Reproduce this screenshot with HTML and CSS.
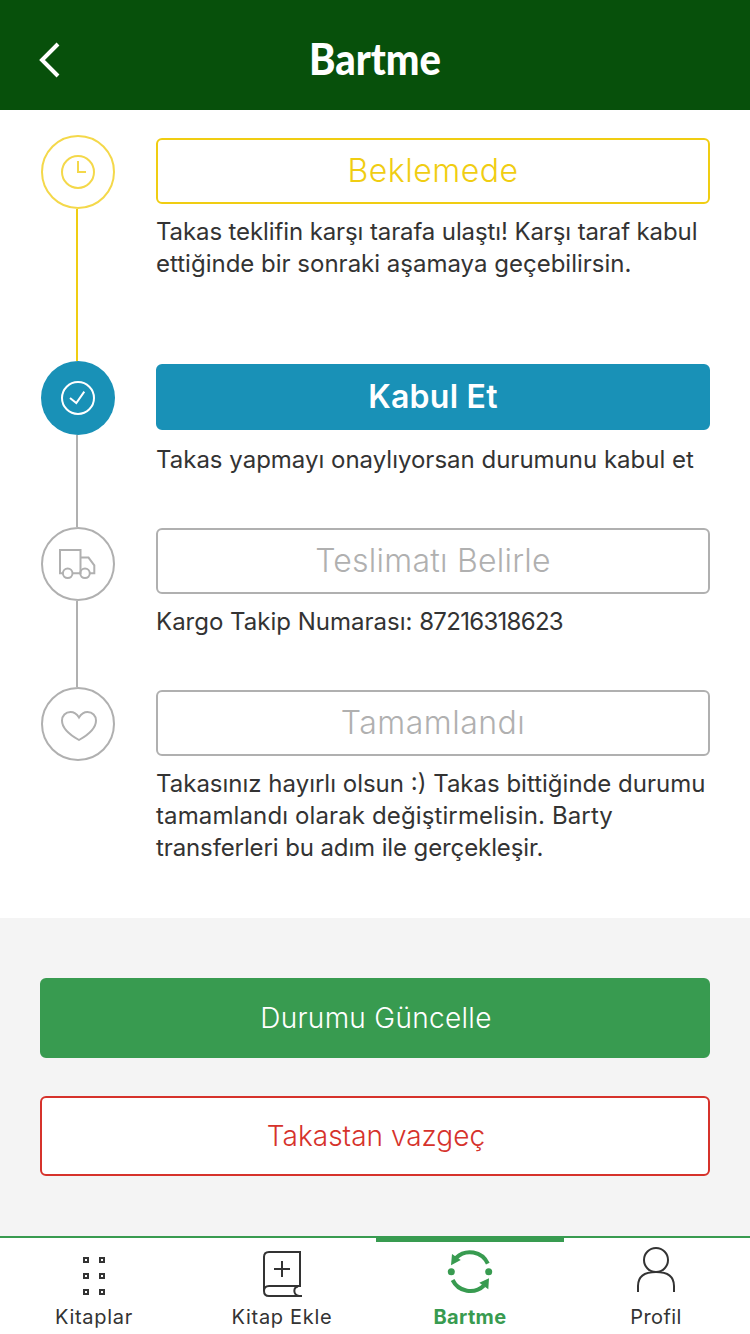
FILE: index.html
```html
<!DOCTYPE html>
<html lang="tr">
<head>
<meta charset="utf-8">
<title>Bartme</title>
<link rel="stylesheet" href="styles.css">
</head>
<body>
<div class="screen">
  <header class="header">
    <svg class="back" width="24" height="38" viewBox="0 0 24 38"><path d="M20 3 4 19l16 16" fill="none" stroke="#fff" stroke-width="4"/></svg>
    <h1 class="title">Bartme</h1>
  </header>

  <main class="steps">
    <section class="step step-waiting">
      <div class="rail">
        <svg class="badge" viewBox="0 0 74 74"><circle cx="37" cy="37" r="36"/><circle cx="37" cy="37" r="16"/><path d="M37 26v11h8"/></svg>
        <i class="line"></i>
      </div>
      <div class="body">
        <div class="status">Beklemede</div>
        <p class="note"><span class="fit-tight">Takas teklifin karşı tarafa ulaştı! Karşı taraf kabul</span><br>ettiğinde bir sonraki aşamaya geçebilirsin.</p>
      </div>
    </section>

    <section class="step step-accept">
      <div class="rail">
        <svg class="badge" viewBox="0 0 74 74"><circle class="disc" cx="37" cy="37" r="37"/><circle cx="37" cy="37" r="16"/><path d="m29 37 6.300 5L43.300 30.700"/></svg>
        <i class="line"></i>
      </div>
      <div class="body">
        <div class="status">Kabul Et</div>
        <p class="note">Takas yapmayı onaylıyorsan durumunu kabul et</p>
      </div>
    </section>

    <section class="step step-delivery">
      <div class="rail">
        <svg class="badge" viewBox="0 0 74 74"><circle cx="37" cy="37" r="36"/><path d="M22 46.300h-3V23h20.500v23.300h-8M39.500 30.600h8l5.800 7.700v8h-4.500"/><circle cx="26.700" cy="46.300" r="4.800"/><circle cx="44" cy="46.300" r="4.800"/></svg>
        <i class="line"></i>
      </div>
      <div class="body">
        <div class="status">Teslimatı Belirle</div>
        <p class="note">Kargo Takip Numarası: <span class="fit-number">87216318623</span></p>
      </div>
    </section>

    <section class="step step-done">
      <div class="rail">
        <svg class="badge" viewBox="0 0 74 74"><circle cx="37" cy="37" r="36"/><path d="M38 30.500C35.500 26.500 32.500 25 29.500 25c-5 0-8.500 3.800-8.500 8.500C21 41.500 29 48 38 53c9-5 17-11.500 17-19.500 0-4.700-3.500-8.500-8.500-8.500-3 0-6 1.500-8.500 5.500z"/></svg>
      </div>
      <div class="body">
        <div class="status">Tamamlandı</div>
        <p class="note">Takasınız hayırlı olsun :) Takas bittiğinde durumu<br><span class="fit-loose">tamamlandı olarak değiştirmelisin. Barty</span><br><span class="fit-tight">transferleri bu adım ile gerçekleşir.</span></p>
      </div>
    </section>
  </main>

  <div class="actions">
    <button class="action update">Durumu Güncelle</button>
    <button class="action cancel">Takastan vazgeç</button>
  </div>

  <nav class="tabs">
    <a class="tab">
      <svg class="icon" viewBox="0 0 60 67"><path d="M20 20h4v4h-4zM36 20h4v4h-4zM20 36h4v4h-4zM36 36h4v4h-4zM20 52h4v4h-4zM36 52h4v4h-4z"/></svg>
      Kitaplar
    </a>
    <a class="tab">
      <svg class="icon" viewBox="0 0 60 67"><path d="M12 53V19q0-5 5-5h31v34H17q-5 0-5 5t5 5h33M46 48.500c-5 1-5 8.500 1 9.500M30 23v16M22 31h16"/></svg>
      Kitap Ekle
    </a>
    <a class="tab active">
      <svg class="icon" viewBox="0 0 60 67"><g stroke-width="4"><path d="M47.800 25.700A19.700 19.700 0 0 0 16 20M12.600 42A19.700 19.700 0 0 0 44 47.500"/></g><g class="solid"><circle cx="11.300" cy="33.700" r="3.500"/><circle cx="48.700" cy="33.700" r="3.500"/><path d="M12 16 11 27.200l9.800-5.200zM49 40.300l-.7 11-9-6.500z"/></g></svg>
      Bartme
    </a>
    <a class="tab profile">
      <svg class="icon" viewBox="0 0 60 67"><circle cx="30" cy="22" r="12"/><path d="M12 54v-6c0-9 6-14 18-14s18 5 18 14v6"/></svg>
      Profil
    </a>
  </nav>
</div>
</body>
</html>
```

FILE: styles.css
```css
* { box-sizing: border-box; }
body { margin: 0; font-family: Inter, "Open Sans", sans-serif; color: #333; background: #fff; }
.screen { width: 750px; height: 1334px; display: flex; flex-direction: column; overflow: hidden; }

.header { height: 110px; background: #07500b; display: grid; grid-template-columns: 110px 1fr 110px; align-items: center; }
.back { margin: 10px 0 0 38px; }
.title { margin: 7px 0 0; color: #fff; font: 900 43px/60px Lato, sans-serif; text-align: center; transform: scaleX(.93); }

.steps { height: 808px; padding: 25px 40px 0 41px; }
.step { display: grid; grid-template-columns: 74px 1fr; column-gap: 41px; }
.step-waiting { height: 226px; }
.step-accept { height: 166px; }
.step-delivery { height: 160px; }
.rail { display: flex; flex-direction: column; }
.badge { width: 74px; height: 74px; flex: none; fill: none; stroke: #b0b0b0; stroke-width: 2; }
.line { flex: 1; width: 2px; margin-left: 35px; background: #b0b0b0; }
.body { padding-top: 3px; }
.status { height: 66px; border: 2px solid #b0b0b0; border-radius: 6px; color: #b0b0b0; font-size: 32px; font-weight: 350; line-height: 62px; letter-spacing: .5px; text-align: center; }
.note { margin: 12px 0 0; font-size: 24px; line-height: 32px; white-space: nowrap; }
.fit-tight { letter-spacing: -.11px; }
.fit-loose { letter-spacing: .12px; }
.fit-number { letter-spacing: -.7px; }

.step-waiting .badge { stroke: #f4d84a; }
.step-waiting .line { background: #f0cd12; }
.step-waiting .status { border-color: #f0cd12; color: #f0cd12; }
.step-accept .badge { stroke: #fff; }
.step-accept .disc { fill: #1991b7; stroke: none; }
.step-accept .status { background: #1991b7; border-color: #1991b7; color: #fff; font-weight: 600; letter-spacing: .25px; }
.step-accept .note { margin-top: 14px; }
.step-delivery .body { padding-top: 1px; }
.step-delivery .status { letter-spacing: .25px; }

.actions { height: 318px; padding: 60px 40px 0; background: #f4f4f4; display: flex; flex-direction: column; gap: 38px; }
.action { height: 80px; padding: 0 0 0 2px; border: 2px solid; border-radius: 6px; font: 350 28px/76px Inter, sans-serif; }
.update { background: #389b50; border-color: #389b50; color: #fff; letter-spacing: .3px; }
.cancel { background: #fff; border-color: #d6322b; color: #d6322b; }

.tabs { height: 98px; border-top: 2px solid #389b50; background: #fff; display: grid; grid-template-columns: 188px 188px 188px 184px; }
.tab { display: flex; flex-direction: column; align-items: center; font-size: 20px; line-height: 24px; letter-spacing: .7px; }
.icon { width: 60px; height: 67px; flex: none; fill: none; stroke: #333; stroke-width: 2; }
.active { color: #389b50; font-weight: 700; letter-spacing: .35px; box-shadow: inset 0 4px #389b50; }
.active .icon { stroke: #389b50; }
.solid { fill: #389b50; stroke: none; }
.profile { letter-spacing: .4px; }
```
